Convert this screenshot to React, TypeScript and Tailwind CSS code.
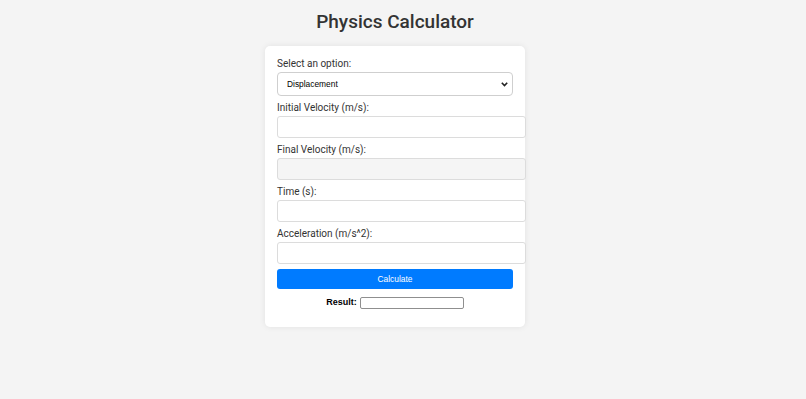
import React from "react";

function Field({ label, disabled }: { label: string; disabled?: boolean }) {
  return (
    <div className="flex flex-col">
      <label className="h-4 text-[10px] leading-4 text-[#333]">{label}</label>
      <input
        type="text"
        disabled={disabled}
        className={`mb-1 h-[22px] w-[249px] rounded-[3px] border border-[#dcdcdc] ${disabled ? "bg-[#f5f5f5]" : "bg-white"}`}
      />
    </div>
  );
}

export default function App() {
  return (
    <div className="min-h-[399px] w-full bg-[#f4f4f4] font-['Roboto',sans-serif]">
      <div className="flex w-[790px] flex-col items-center pt-[10px]">
        <h1 className="mb-3 h-6 text-[19px] font-medium leading-6 text-[#333]">Physics Calculator</h1>
        <div className="w-[260px] rounded-[5px] bg-white px-3 pb-[17px] pt-[10px] shadow-[0_0_6px_rgba(0,0,0,0.08)]">
          <label className="block h-4 text-[10px] leading-4 text-[#333]">Select an option:</label>
          <div className="relative mb-1 h-6 w-[236px]">
            <select className="block h-6 w-full appearance-none rounded-[4px] border border-[#cfcfcf] bg-white pl-[9px] font-['Liberation_Sans',sans-serif] text-[8.4px] text-black">
              <option>Displacement</option>
            </select>
            <svg className="pointer-events-none absolute right-[5px] top-[10px]" width="7" height="5" viewBox="0 0 7 5">
              <path d="M0.8 0.8 L3.5 3.6 L6.2 0.8" stroke="#222" strokeWidth="1.6" fill="none" />
            </svg>
          </div>
          <Field label="Initial Velocity (m/s):" />
          <Field label="Final Velocity (m/s):" disabled />
          <Field label="Time (s):" />
          <Field label="Acceleration (m/s^2):" />
          <button className="mt-[1px] flex h-5 w-[236px] items-center justify-center rounded-[3px] bg-[#007bff] font-['Liberation_Sans',sans-serif] text-[8.4px] text-white">
            Calculate
          </button>
          <div className="mt-[7px] flex items-center justify-center gap-[3px]">
            <span className="font-['Liberation_Sans',sans-serif] text-[9px] font-bold text-black">Result:</span>
            <input type="text" className="h-3 w-[104px] rounded-[2px] border border-[#8f8f8f] bg-white" />
          </div>
        </div>
      </div>
    </div>
  );
}
